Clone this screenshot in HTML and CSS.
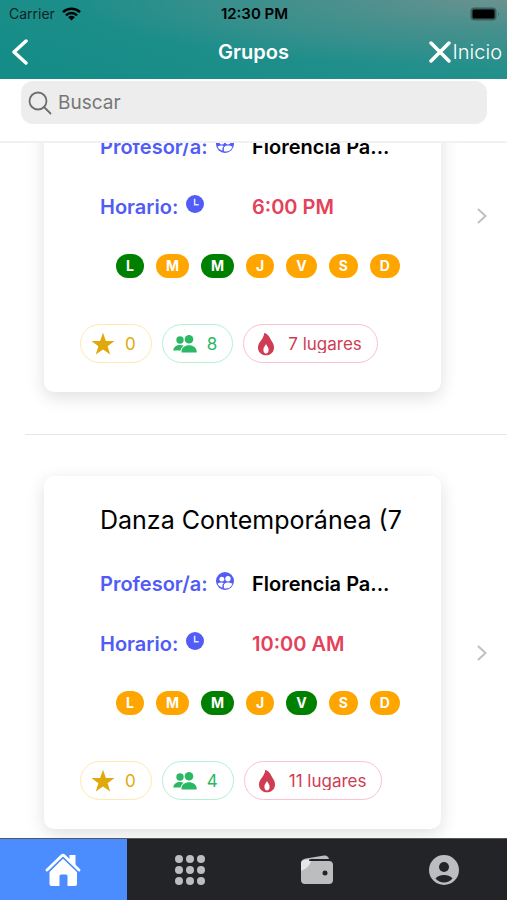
FILE: index.html
```html
<!DOCTYPE html>
<html lang="es">
<head>
<meta charset="utf-8">
<meta name="viewport" content="width=device-width, initial-scale=1">
<title>Grupos</title>
<link rel="stylesheet" href="styles.css">
</head>
<body>
<svg class="defs" aria-hidden="true">
  <symbol id="supervised" viewBox="0 0 24 24"><circle cx="12" cy="12" r="12" fill="currentColor"/><circle cx="7.800" cy="9.500" r="3.300" fill="#fff"/><circle cx="16" cy="9" r="3.600" fill="#fff"/><path fill="#fff" d="M2 15.500Q6 13 10.500 14.500Q8.500 16 8.500 18.500V21Q3.500 19.500 2 15.500zM22 15.500Q19 13.800 15.500 14Q10.500 14.500 10.500 18V21.800Q19 23 22 15.500z"/></symbol>
  <symbol id="clock" viewBox="0 0 24 24"><circle cx="12" cy="12" r="12" fill="currentColor"/><path d="M11.500 5v8h5.500" fill="none" stroke="#e4e6ff" stroke-width="2"/></symbol>
  <symbol id="star" viewBox="0 0 24 24"><path fill="currentColor" d="M12 .8l2.900 8.300h8.600l-6.900 5.100 2.600 8.400L12 17.500l-7.200 5.100 2.600-8.400L.5 9.100h8.600z"/></symbol>
  <symbol id="people" viewBox="0 0 24 24"><circle cx="7" cy="8" r="3.700" fill="currentColor"/><path fill="currentColor" d="M.3 18.500c0-3.500 3.300-5.500 6.700-5.500 1.500 0 2.700.3 3.700.8-1.700 1-2.800 2.700-3.100 4.700z"/><circle cx="16" cy="7.200" r="4.300" fill="currentColor"/><path fill="currentColor" d="M8.600 20.500c-.8-4.200 3-7.200 7.400-7.200s8.300 3 7.600 7.200z"/></symbol>
  <symbol id="flame" viewBox="0 0 24 24"><path fill="currentColor" d="M10.300.8C14.500 2.500 16 6 17.300 8.500c1.700 2.500 2.700 4.300 2.700 7 0 4.600-3.300 7.800-8 7.800s-8-3.200-8-7.800c0-3.300 1.600-5 3-7C8.800 6 10 4 10.300.8z"/><path fill="#fff" d="M12 12c1 2 2.600 3.300 2.600 5.800S13.500 21.500 12 21.500s-2.600-1.200-2.600-3.700S11 14 12 12z"/></symbol>
  <symbol id="next" viewBox="0 0 12 18"><path d="M2 2l7.500 7L2 16" fill="none" stroke="currentColor" stroke-width="2"/></symbol>
</svg>

<header class="top">
  <div class="status">
    <span class="carrier">Carrier
      <svg width="19" height="14" viewBox="0 0 19 14"><g fill="none" stroke="#000" stroke-width="2.500"><path d="M1 5.200a12.300 12.300 0 0 1 17 0M4 8.300a8 8 0 0 1 11 0"/></g><path d="M9.500 13.500L6.200 10.200a4.700 4.700 0 0 1 6.600 0z"/></svg>
    </span>
    <span class="time">12:30 PM</span>
    <svg class="battery" width="30" height="14" viewBox="0 0 30 14"><rect x=".5" y=".5" width="26" height="13" rx="4" fill="#37605e"/><rect x="2.500" y="2.500" width="22" height="9" rx="1.500"/><path d="M28 5a3 3 0 0 1 0 4z" fill="#37605e"/></svg>
  </div>
  <nav class="nav">
    <a class="back" href="#" aria-label="Atrás"><svg width="18" height="26" viewBox="0 0 18 26"><path d="M15 2L3 13l12 11" fill="none" stroke="#fff" stroke-width="3.500" stroke-linecap="round" stroke-linejoin="round"/></svg></a>
    <h1>Grupos</h1>
    <a class="home" href="#"><svg width="22" height="22" viewBox="0 0 22 22"><path d="M2 2l18 18M20 2L2 20" stroke="#fff" stroke-width="3.500" stroke-linecap="round"/></svg>Inicio</a>
  </nav>
</header>

<form class="search">
  <label class="field">
    <svg width="24" height="24" viewBox="0 0 24 24"><g fill="none" stroke="#6e6e6e" stroke-width="1.800" stroke-linecap="round"><circle cx="10" cy="10" r="8.500"/><path d="M16 16l6.500 6.500"/></g></svg>
    <input type="text" placeholder="Buscar" aria-label="Buscar">
  </label>
</form>

<main class="content">
  <ul class="groups">
    <li class="group">
      <article class="card">
        <h2>Danza Contemporánea (7</h2>
        <dl>
          <dt>Profesor/a: <svg><use href="#supervised"/></svg></dt><dd>Florencia Pa...</dd>
          <dt>Horario: <svg><use href="#clock"/></svg></dt><dd class="hour">6:00 PM</dd>
        </dl>
        <div class="days"><span class="on">L</span><span>M</span><span class="on">M</span><span>J</span><span>V</span><span>S</span><span>D</span></div>
        <div class="chips">
          <span class="chip gold"><svg><use href="#star"/></svg><b>0</b></span>
          <span class="chip green"><svg><use href="#people"/></svg><b>8</b></span>
          <span class="chip red"><svg><use href="#flame"/></svg><b>7 lugares</b></span>
        </div>
      </article>
      <svg class="next"><use href="#next"/></svg>
    </li>
    <li class="group">
      <article class="card">
        <h2>Danza Contemporánea (7</h2>
        <dl>
          <dt>Profesor/a: <svg><use href="#supervised"/></svg></dt><dd>Florencia Pa...</dd>
          <dt>Horario: <svg><use href="#clock"/></svg></dt><dd class="hour">10:00 AM</dd>
        </dl>
        <div class="days"><span>L</span><span>M</span><span class="on">M</span><span>J</span><span class="on">V</span><span>S</span><span>D</span></div>
        <div class="chips">
          <span class="chip gold"><svg><use href="#star"/></svg><b>0</b></span>
          <span class="chip green"><svg><use href="#people"/></svg><b>4</b></span>
          <span class="chip red"><svg><use href="#flame"/></svg><b>11 lugares</b></span>
        </div>
      </article>
      <svg class="next"><use href="#next"/></svg>
    </li>
  </ul>
</main>

<nav class="tabs">
  <a class="active" href="#" aria-label="Inicio"><svg width="36" height="34" viewBox="0 0 36 34"><path fill="#fff" d="M18 5.500L32 19v12q0 2-2 2h-7.500V23q0-1.500-1.500-1.500h-5q-1.500 0-1.500 1.500v10H6.500q-2 0-2-2V19z"/><path d="M2 17.300L18 2.300l16 15" fill="none" stroke="#4b8dff" stroke-width="5"/><path d="M2 17L16.500 3q1.500-1.500 3 0L34 17" fill="none" stroke="#fff" stroke-width="2.800" stroke-linecap="round"/><path fill="#fff" d="M24.500 2h6v12.500l-6-6z"/></svg></a>
  <a href="#" aria-label="Menú"><svg width="30" height="30" viewBox="0 0 30 30" fill="#bcbdbf"><circle cx="4" cy="4" r="4"/><circle cx="15" cy="4" r="4"/><circle cx="26" cy="4" r="4"/><circle cx="4" cy="15" r="4"/><circle cx="15" cy="15" r="4"/><circle cx="26" cy="15" r="4"/><circle cx="4" cy="26" r="4"/><circle cx="15" cy="26" r="4"/><circle cx="26" cy="26" r="4"/></svg></a>
  <a href="#" aria-label="Cartera"><svg width="34" height="30" viewBox="0 0 34 30"><path fill="#bcbdbf" d="M1 7q1-3 5-3.500L24 .5q4-.5 5 3.500H11L8 6h21q4 0 4 4v15q0 4-4 4H5q-4 0-4-4z"/><path fill="#e6e6e7" d="M1 16V8q1-4 8-3.500L11 6Q9 13 1 16z"/><path d="M9 5.200h21" stroke="#222428" stroke-width="1.300"/><circle cx="25" cy="18" r="2.500" fill="#222428"/></svg></a>
  <a href="#" aria-label="Perfil"><svg width="30" height="30" viewBox="0 0 30 30"><circle cx="15" cy="15" r="15" fill="#bcbdbf"/><circle cx="15" cy="12" r="5" fill="#222428"/><path fill="#222428" d="M6.500 23.500Q9 20 15 20t8.500 3.500Q20 27.500 15 27.500t-8.500-4z"/></svg></a>
</nav>
</body>
</html>
```
FILE: styles.css
```css
* { box-sizing: border-box; }
body {
  margin: 0;
  height: 100vh;
  display: flex;
  flex-direction: column;
  background: #fff;
  color: #000;
  font-family: Inter, "Liberation Sans", sans-serif;
  overflow: hidden;
}
a { color: inherit; text-decoration: none; }
svg { display: block; flex: none; }
.defs { display: none; }

.top {
  flex: none;
  background: radial-gradient(ellipse at 100% 0, #6a928f, #48908d 25%, rgba(38, 143, 140, 0) 60%), linear-gradient(20deg, #148c87, #2a918e);
}
.status {
  display: grid;
  grid-template-columns: 1fr auto 1fr;
  align-items: center;
  height: 27px;
  padding: 0 7px 0 9px;
  font-size: 14px;
}
.carrier { display: flex; align-items: center; gap: 7px; color: #0b2524; }
.time { font-size: 15px; font-weight: 600; }
.battery { justify-self: end; }
.nav {
  display: grid;
  grid-template-columns: 1fr auto 1fr;
  align-items: center;
  height: 52px;
  padding: 0 5px 2px;
  color: #fff;
}
.back { padding-left: 6px; }
.nav h1 { margin: 0; font-size: 20px; font-weight: 600; }
.home { display: flex; align-items: center; justify-self: end; gap: 2px; font-size: 20px; font-weight: 300; }

.search {
  flex: none;
  margin: 0;
  padding: 2px 20px 17px 21px;
  border-bottom: 2px solid #f1f1f1;
}
.field {
  display: flex;
  align-items: center;
  gap: 6px;
  height: 43px;
  padding: 0 7px;
  border-radius: 12px;
  background: #ededed;
}
.field input {
  flex: 1;
  min-width: 0;
  padding: 0;
  border: 0;
  outline: 0;
  background: none;
  font: 400 19px/24px Inter, sans-serif;
}
.field input::placeholder { color: #777; opacity: 1; }

.content { flex: 1; min-height: 0; overflow: hidden; }
/* The list rests part of the way through its first group. */
.groups { margin: -145px 0 0; padding: 0; list-style: none; }
.group {
  display: flex;
  align-items: center;
  justify-content: space-between;
  margin-left: 25px;
  padding: 41px 19px 42px;
  border-bottom: 1px solid #e6e6e6;
}
.card {
  flex: 1;
  min-width: 0;
  margin-right: 35px;
  padding: 28px 36px 29px;
  border-radius: 10px;
  background: #fff;
  box-shadow: 0 5px 18px rgba(0, 0, 0, .13);
}
.card h2 {
  margin: 0 0 36px 20px;
  font-size: 25px;
  font-weight: 400;
  line-height: 32px;
  white-space: nowrap;
}
.card dl {
  display: grid;
  grid-template-columns: 152px 1fr;
  row-gap: 36px;
  margin: 0 0 35px 20px;
  font-size: 20px;
  font-weight: 600;
  line-height: 24px;
  white-space: nowrap;
}
.card dt { display: flex; gap: 8px; color: #505cf5; }
.card dt svg { width: 18px; height: 18px; }
.card dd { margin: 0; }
.card .hour { color: #e4415a; }
.days { display: flex; gap: 12px; margin: 0 0 46px 36px; }
.days span {
  padding: 0 10px;
  border-radius: 12px;
  background: #ffa500;
  color: #fff;
  font-size: 14px;
  font-weight: 700;
  line-height: 24px;
}
.days .on { background: #008000; }
.chips { display: flex; gap: 10px; }
.chip {
  display: flex;
  align-items: center;
  gap: 10px;
  height: 39px;
  padding: 0 15px 0 10px;
  border: 1px solid;
  border-radius: 20px;
  white-space: nowrap;
}
.chip svg { width: 24px; height: 24px; }
.chip b { font-size: 17px; font-weight: 400; line-height: 18px; overflow: hidden; }
.gold { border-color: #ffe9b0; color: #dfa90c; }
.green { border-color: #b5f0d3; color: #2ab865; }
.red { border-color: #f8c3cf; color: #cf3c53; }
.next { width: 12px; height: 18px; color: #c0c0c2; }

.tabs {
  flex: none;
  display: grid;
  grid-template-columns: repeat(4, 1fr);
  height: 62px;
  border-top: 1px solid #55575a;
  background: #222428;
}
.tabs a { display: flex; align-items: center; justify-content: center; }
.tabs .active { background: #4b8dff; }
```
